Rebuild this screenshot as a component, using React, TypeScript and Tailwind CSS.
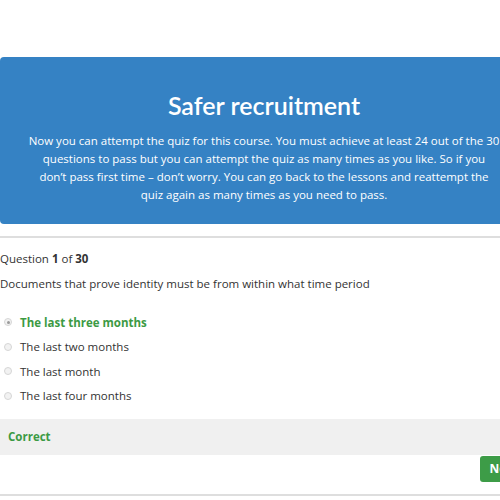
const options = [
  { label: 'The last three months', correct: true },
  { label: 'The last two months', correct: false },
  { label: 'The last month', correct: false },
  { label: 'The last four months', correct: false },
];

const introLines = [
  'Now you can attempt the quiz for this course. You must achieve at least 24 out of the 30',
  'questions to pass but you can attempt the quiz as many times as you like. So if you',
  'don’t pass first time – don’t worry. You can go back to the lessons and reattempt the',
  'quiz again as many times as you need to pass.',
];

function QuizIntro() {
  return (
    <div className="rounded-[4px] bg-[#3582c4] px-5 pt-[33px] pb-[20px] text-center text-white">
      <h1 className="font-['Lato',sans-serif] text-[25px] leading-[30px] font-semibold">Safer recruitment</h1>
      <p className="mt-3 text-[11.5px] leading-[18px]">
        {introLines.map((line) => (
          <span key={line} className="block whitespace-nowrap">
            {line}
          </span>
        ))}
      </p>
    </div>
  );
}

function Radio({ checked }: { checked: boolean }) {
  return (
    <span className="flex size-[8px] items-center justify-center rounded-full border border-[#d6d6d6] bg-[#f2f2f2]">
      {checked && <span className="size-[3px] rounded-full bg-[#9a9a9a]" />}
    </span>
  );
}

export default function App() {
  return (
    <div className="h-[500px] w-[500px] overflow-hidden bg-white font-['Open_Sans','Liberation_Sans',sans-serif] text-[#333]">
      <div className="w-[528px] pt-[57px]">
        <QuizIntro />
        <div className="mt-3 h-[2px] bg-[#dedede]" />

        <div className="mt-[11px] text-[11.5px] leading-[20px]">
          Question <b>1</b> of <b>30</b>
        </div>
        <div className="mt-[5px] text-[11.5px] leading-[20px]">
          Documents that prove identity must be from within what time period
        </div>

        <ul className="mt-4">
          {options.map((option) => (
            <li key={option.label} className="flex h-[24.5px] items-center gap-[8px] pl-[4px] text-[11.5px]">
              <Radio checked={option.correct} />
              <span className={option.correct ? 'font-bold text-[#3c9a44]' : ''}>{option.label}</span>
            </li>
          ))}
        </ul>

        <div className="mt-[11px] flex h-9 items-center bg-[#f0f0f0] px-2 text-[11.5px] font-bold text-[#3c9a44]">
          Correct
        </div>

        <div className="mt-px flex justify-end">
          <button className="h-[26px] w-12 rounded-[3px] bg-[#3d9c47] text-center text-[12px] font-bold text-white">
            Next
          </button>
        </div>

        <div className="mt-3 h-[2px] bg-[#dedede]" />
      </div>
    </div>
  );
}
